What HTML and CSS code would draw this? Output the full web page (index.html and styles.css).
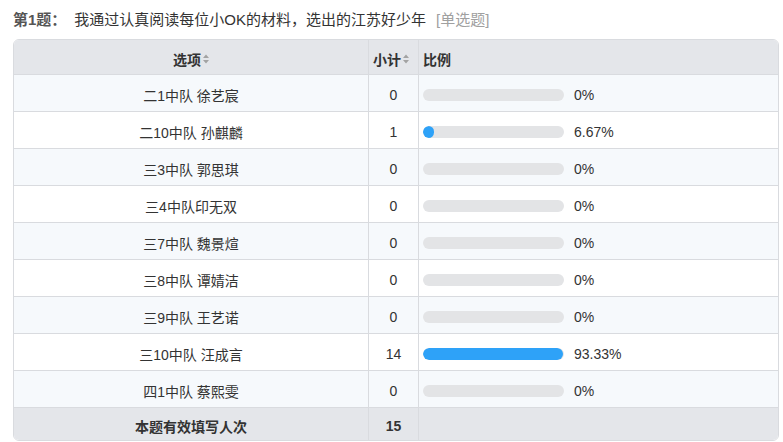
FILE: index.html
```html
<!DOCTYPE html>
<html lang="zh-CN">
<head>
<meta charset="utf-8">
<title>第1题</title>
<link rel="stylesheet" href="styles.css">
</head>
<body>
<div class="page">
  <div class="title">
    <span class="qno">第1题：</span>
    <span class="qtext">我通过认真阅读每位小OK的材料，选出的江苏好少年</span>
    <span class="qtype">[单选题]</span>
  </div>
  <div class="table">
    <div class="row head">
      <div class="cell c1 center">选项<svg class="sort" width="6" height="10" viewBox="0 0 6 10"><path d="M3 0.5 L6 4 L0 4 Z M0 6 L6 6 L3 9.5 Z" fill="#a3a3a3"/></svg></div>
      <div class="cell c2 left">小计<svg class="sort" width="6" height="10" viewBox="0 0 6 10"><path d="M3 0.5 L6 4 L0 4 Z M0 6 L6 6 L3 9.5 Z" fill="#a3a3a3"/></svg></div>
      <div class="cell c3 left">比例</div>
    </div>
    <div class="row odd">
      <div class="cell c1 center">二1中队 徐艺宸</div>
      <div class="cell c2 center">0</div>
      <div class="cell c3 left"><div class="bar"><div class="fill" style="width:0%"></div></div><span class="pct">0%</span></div>
    </div>
    <div class="row">
      <div class="cell c1 center">二10中队 孙麒麟</div>
      <div class="cell c2 center">1</div>
      <div class="cell c3 left"><div class="bar"><div class="fill" style="width:6.67%"></div></div><span class="pct">6.67%</span></div>
    </div>
    <div class="row odd">
      <div class="cell c1 center">三3中队 郭思琪</div>
      <div class="cell c2 center">0</div>
      <div class="cell c3 left"><div class="bar"><div class="fill" style="width:0%"></div></div><span class="pct">0%</span></div>
    </div>
    <div class="row">
      <div class="cell c1 center">三4中队印无双</div>
      <div class="cell c2 center">0</div>
      <div class="cell c3 left"><div class="bar"><div class="fill" style="width:0%"></div></div><span class="pct">0%</span></div>
    </div>
    <div class="row odd">
      <div class="cell c1 center">三7中队 魏景煊</div>
      <div class="cell c2 center">0</div>
      <div class="cell c3 left"><div class="bar"><div class="fill" style="width:0%"></div></div><span class="pct">0%</span></div>
    </div>
    <div class="row">
      <div class="cell c1 center">三8中队 谭婧洁</div>
      <div class="cell c2 center">0</div>
      <div class="cell c3 left"><div class="bar"><div class="fill" style="width:0%"></div></div><span class="pct">0%</span></div>
    </div>
    <div class="row odd">
      <div class="cell c1 center">三9中队 王艺诺</div>
      <div class="cell c2 center">0</div>
      <div class="cell c3 left"><div class="bar"><div class="fill" style="width:0%"></div></div><span class="pct">0%</span></div>
    </div>
    <div class="row">
      <div class="cell c1 center">三10中队 汪成言</div>
      <div class="cell c2 center">14</div>
      <div class="cell c3 left"><div class="bar"><div class="fill" style="width:99.5%"></div></div><span class="pct">93.33%</span></div>
    </div>
    <div class="row odd">
      <div class="cell c1 center">四1中队 蔡熙雯</div>
      <div class="cell c2 center">0</div>
      <div class="cell c3 left"><div class="bar"><div class="fill" style="width:0%"></div></div><span class="pct">0%</span></div>
    </div>
    <div class="row foot">
      <div class="cell c1 center">本题有效填写人次</div>
      <div class="cell c2 center">15</div>
      <div class="cell c3 left"></div>
    </div>
  </div>
</div>
</body>
</html>
```
FILE: styles.css
```css
* { box-sizing: border-box; }
html, body { margin: 0; padding: 0; background: #fff; }
body {
  font-family: "Liberation Sans", "Noto Sans CJK SC", sans-serif;
  font-size: 14px;
  color: #333;
}
.page { padding: 10px 0 0 13px; }
.title {
  height: 20px;
  line-height: 20px;
  display: flex;
  align-items: center;
  white-space: nowrap;
}
.qno { font-size: 15px; font-weight: bold; color: #555; }
.qtext { margin-left: 8px; font-size: 15px; color: #333; }
.qtype { margin-left: 10px; font-size: 15px; color: #a0a0a0; }
.table {
  margin-top: 9px;
  width: 766px;
  border: 1px solid #d9dbdf;
  border-radius: 6px;
  overflow: hidden;
}
.row {
  display: grid;
  grid-template-columns: 355px 50px 1fr;
  height: 37px;
  border-bottom: 1px solid #d9dbdf;
  background: #fff;
}
.row.odd { background: #f6f9fc; }
.row.head { height: 35px; background: #e4e6ea; font-weight: bold; }
.row.foot { height: 32px; border-bottom: none; background: #e4e6ea; font-weight: bold; }
.cell {
  display: flex;
  align-items: center;
  padding-top: 4px;
  border-right: 1px solid #d9dbdf;
  white-space: nowrap;
}
.cell.c3 { border-right: none; }
.center { justify-content: center; }
.left { justify-content: flex-start; padding-left: 4px; }
.sort { margin-left: 2px; }
.bar {
  width: 141px;
  height: 12px;
  border-radius: 6px;
  background: #e3e4e6;
  overflow: hidden;
}
.fill {
  height: 100%;
  min-width: 11px;
  border-radius: 6px;
  background: #2ea2f8;
}
.fill[style="width:0%"] { min-width: 0; }
.pct { margin-left: 10px; font-size: 14px; }
```
